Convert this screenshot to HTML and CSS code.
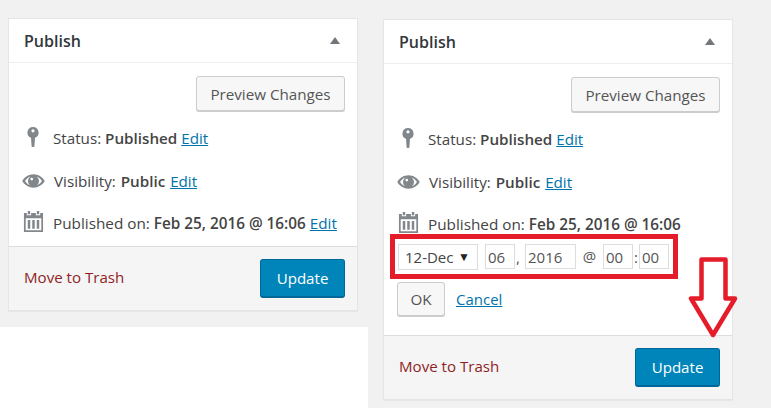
FILE: index.html
```html
<!DOCTYPE html>
<html lang="en">
<head>
<meta charset="utf-8">
<title>Publish</title>
<link rel="stylesheet" href="styles.css">
</head>
<body>
<svg class="defs" width="0" height="0" aria-hidden="true">
  <symbol id="key" viewBox="0 0 18 20"><path d="M9 0a5.600 5.600 0 0 0-2 10.800L7.600 19.400Q9 20.600 10.400 19.400L11 10.800A5.600 5.600 0 0 0 9 0Zm0 2.200a1.600 1.600 0 1 1 0 3.200 1.600 1.600 0 0 1 0-3.200Z" fill="#82878c" fill-rule="evenodd"/></symbol>
  <symbol id="eye" viewBox="0 0 24 14"><path d="M12 0C7 0 2.600 2.900.3 7c2.300 4.100 6.700 7 11.700 7s9.400-2.900 11.700-7C21.400 2.900 17 0 12 0Zm-8.800 7C4.600 4.800 6.500 3.200 8.800 2.300A6 6 0 0 0 6.200 7a5.800 5.800 0 0 0 2.600 4.700C6.500 10.800 4.600 9.200 3.200 7Zm17.600 0c-1.400 2.200-3.300 3.800-5.600 4.700A5.800 5.800 0 0 0 17.800 7a6 6 0 0 0-2.600-4.700c2.300.9 4.200 2.500 5.600 4.700Z" fill="#82878c" fill-rule="evenodd"/><circle cx="12" cy="7" r="4.600" fill="#82878c"/><circle cx="10.200" cy="5" r="1.400" fill="#fff"/></symbol>
  <symbol id="cal" viewBox="0 0 20 22"><path d="M4 0h2.500v3.500H4zM13.500 0H16v3.500h-2.500z" fill="#82878c"/><path d="M0 2h3v2.500h4.500V2h5v2.500H17V2h3v20H0Zm1.800 5.500v12.700h16.400V7.500Z" fill="#82878c" fill-rule="evenodd"/><path d="M4 9.500h2.600v9H4zM8.700 9.500h2.600v9H8.700zM13.400 9.500H16v9h-2.600z" fill="#82878c"/></symbol>
</svg>
<main class="page">
  <div class="col-left">
    <div class="gray-left">
      <section class="box">
        <header class="box-head"><h2>Publish</h2><span class="toggle"></span></header>
        <div class="box-body">
          <div class="preview-row"><a class="btn">Preview Changes</a></div>
          <div class="misc misc-status"><svg class="ico ico-key"><use href="#key"/></svg><span>Status: <b>Published</b> <a class="link">Edit</a></span></div>
          <div class="misc misc-vis"><svg class="ico ico-eye"><use href="#eye"/></svg><span>Visibility: <b>Public</b> <a class="link">Edit</a></span></div>
          <div class="misc misc-pub"><svg class="ico ico-cal"><use href="#cal"/></svg><span>Published on: <b>Feb 25, 2016 @ 16:06</b> <a class="link">Edit</a></span></div>
        </div>
        <footer class="box-foot"><a class="trash">Move to Trash</a><a class="btn-primary">Update</a></footer>
      </section>
    </div>
  </div>
  <div class="col-right">
    <section class="box">
      <header class="box-head"><h2>Publish</h2><span class="toggle"></span></header>
      <div class="box-body">
        <div class="preview-row"><a class="btn">Preview Changes</a></div>
        <div class="misc misc-status"><svg class="ico ico-key"><use href="#key"/></svg><span>Status: <b>Published</b> <a class="link">Edit</a></span></div>
        <div class="misc misc-vis"><svg class="ico ico-eye"><use href="#eye"/></svg><span>Visibility: <b>Public</b> <a class="link">Edit</a></span></div>
        <div class="misc misc-pub"><svg class="ico ico-cal"><use href="#cal"/></svg><span>Published on: <b>Feb 25, 2016 @ 16:06</b></span></div>
        <div class="stamp">
          <div class="fake-select"><span>12-Dec</span><span class="caret">▼</span></div>
          <span class="field f-day">06</span><span class="sep s-comma">,</span>
          <span class="field f-year">2016</span><span class="sep s-at">@</span>
          <span class="field f-time">00</span><span class="sep s-colon">:</span>
          <span class="field f-time">00</span>
        </div>
        <div class="ok-row"><a class="btn btn-ok">OK</a><a class="link">Cancel</a></div>
      </div>
      <footer class="box-foot"><a class="trash">Move to Trash</a><a class="btn-primary">Update</a></footer>
      <svg class="arrow" width="50" height="84" viewBox="0 0 50 84"><path d="M13.500 2.500H37.500V41.500H47L25 78 3 41.500H13.500Z" fill="none" stroke="#e51c2a" stroke-width="4.500" stroke-linejoin="round"/></svg>
    </section>
  </div>
</main>
</body>
</html>
```
FILE: styles.css
```css
* { box-sizing: border-box; }
html, body { margin: 0; padding: 0; }
body { width: 771px; height: 408px; overflow: hidden; background: #fff; font-family: "Open Sans", sans-serif; font-size: 15px; color: #444; }
.defs { position: absolute; }
.page { display: flex; height: 408px; }
.col-left { width: 368px; background: #fff; }
.gray-left { height: 327px; background: #f1f1f1; padding: 18px 0 0 8px; }
.col-right { flex: 1; background: #f1f1f1; padding: 19px 0 0 15px; }
.box { position: relative; width: 350px; background: #fff; border: 1px solid #e5e5e5; box-shadow: 0 1px 1px rgba(0,0,0,.04); }
.box-head { height: 44px; display: flex; align-items: center; justify-content: space-between; padding: 0 16px 0 15px; border-bottom: 1px solid #eee; }
.box-head h2 { margin: 0; font-size: 16px; font-weight: 600; color: #32373c; }
.toggle { width: 0; height: 0; border-left: 5.500px solid transparent; border-right: 5.500px solid transparent; border-bottom: 7px solid #72777c; margin: 0 1px 0 0; }
.box-body { padding: 13px 0 0; }
.preview-row { display: flex; justify-content: flex-end; padding-right: 12px; }
.btn { display: inline-flex; align-items: center; justify-content: center; height: 35px; width: 149px; background: #f7f7f7; border: 1px solid #ccc; border-radius: 3px; box-shadow: 0 1px 0 #ccc; color: #555; font-size: 15.200px; }
.misc { display: flex; align-items: center; height: 24px; font-size: 15.200px; color: #444; }
.misc b { font-weight: 600; }
.misc-status { margin-top: 15px; }
.misc-vis { margin-top: 19px; word-spacing: 1px; }
.misc-pub { margin-top: 18px; font-size: 15.300px; }
.ico { display: block; flex: none; }
.ico-key { width: 18px; height: 20px; margin: -3px 11px 0 15px; }
.ico-eye { width: 23px; height: 14px; margin: 0 9px 0 13px; }
.ico-cal { width: 21px; height: 21px; margin: -3px 9px 0 14px; }
.link { color: #0073aa; text-decoration: underline; }
.box-foot { height: 64px; display: flex; align-items: center; justify-content: space-between; padding: 0 12px 0 15px; background: #f5f5f5; border-top: 1px solid #ddd; }
.col-left .box-body { height: 183px; }
.trash { color: #8f1f1f; font-size: 15.100px; padding-bottom: 4px; }
.btn-primary { display: flex; align-items: center; justify-content: center; width: 85px; height: 39px; background: #0085ba; border: 1px solid #006799; border-bottom-width: 2px; border-radius: 3px; color: #fff; font-size: 15.100px; }
.stamp { display: flex; align-items: center; margin: -2px 0 0 6px; width: 288px; height: 45px; border: 5px solid #e51c2a; padding-left: 3px; font-size: 15px; color: #555; }
.fake-select { display: flex; align-items: center; justify-content: space-between; width: 80px; height: 26px; padding: 0 7px 0 6px; border: 1px solid #ddd; color: #444; }
.caret { font-size: 12px; color: #222; }
.field { display: flex; align-items: center; height: 25px; border: 1px solid #ddd; font-size: 15px; padding: 1px 0 0 2px; }
.f-day { width: 30px; margin-left: 7px; }
.f-year { width: 51px; }
.f-time { width: 30px; }
.sep { display: block; }
.s-comma { width: 10px; padding-left: 1px; }
.s-at { width: 27px; margin-top: -2px; text-align: center; }
.s-colon { width: 6px; text-align: center; }
.ok-row { display: flex; align-items: center; gap: 11px; margin: 3px 0 19px 13px; }
.btn-ok { width: 48px; height: 34px; }
.arrow { position: absolute; left: 304px; top: 237px; }
```
